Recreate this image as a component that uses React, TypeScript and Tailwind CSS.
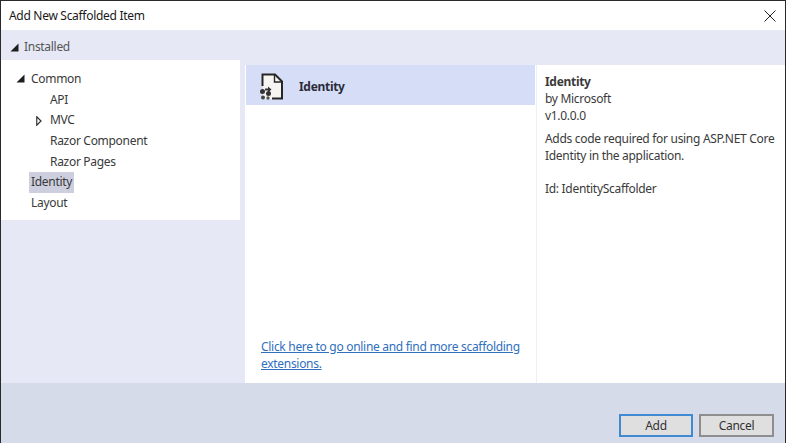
const font = "font-['Noto_Sans','Open_Sans',sans-serif]"

function TriDown({ className }: { className?: string }) {
    return (
        <svg width="9" height="9" viewBox="0 0 9 9" className={className}>
            <path d="M8.5 0.5V8.5H0.5Z" fill="#1e1e1e" />
        </svg>
    )
}

function TriRight() {
    return (
        <svg width="6" height="10" viewBox="0 0 6 10" className="mr-[6px] shrink-0">
            <path d="M0.75 0.75L5 5L0.75 9.25Z" fill="none" stroke="#333" strokeWidth="1.2" />
        </svg>
    )
}

function TreeRow({ label, indent, arrow, selected }: { label: string; indent: string; arrow?: 'open' | 'closed'; selected?: boolean }) {
    return (
        <div className={`flex h-[20.67px] items-center ${indent}`}>
            {arrow === 'open' && <TriDown className="mr-[4px] -mt-[2px] shrink-0" />}
            {arrow === 'closed' && <TriRight />}
            <span className={`px-[2px] h-[20.67px] leading-[20.67px] ${selected ? 'bg-[#cdcfdf]' : ''}`}>{label}</span>
        </div>
    )
}

function IdentityIcon() {
    return (
        <svg width="24" height="28" viewBox="0 0 24 28">
            <path d="M3 2H15L22 9V26H3Z" fill="#f7f5f2" />
            <path d="M2.5 13V1.5H15L22 8.5V25.5H12" fill="none" stroke="#262626" strokeWidth="2" />
            <path d="M14.5 2V9H21.5" fill="none" stroke="#262626" strokeWidth="1.4" />
            <path d="M5 15.5L8 15.5L8 13.5L11.5 16.5L8 19.5L8 17.5L5 17.5Z" fill="#333" />
            <circle cx="2.5" cy="18.5" r="2.5" fill="#333" />
            <circle cx="8.5" cy="20.5" r="2.5" fill="#333" />
            <circle cx="3" cy="24.5" r="2" fill="#444" />
            <circle cx="8" cy="25" r="1.7" fill="#555" />
        </svg>
    )
}

export default function App() {
    return (
        <div className={`w-[786px] h-[443px] flex flex-col overflow-hidden bg-[#e6e9f5] border-t border-[#2a2a2a] border-l border-r text-[12px] tracking-[-0.3px] text-[#3a3a3a] ${font}`}>
            {/* title bar */}
            <div className="h-[29px] shrink-0 bg-white flex items-center justify-between pl-[8px] pr-[9px] text-[#1a1a1a]">
                <span>Add New Scaffolded Item</span>
                <svg width="12" height="12" viewBox="0 0 12 12">
                    <path d="M0.5 0.5L11.5 11.5M11.5 0.5L0.5 11.5" stroke="#222" strokeWidth="1" fill="none" />
                </svg>
            </div>

            {/* installed header */}
            <div className="h-[30px] shrink-0 flex items-center pl-[9px] pt-[4px] gap-[5px] text-[#555]">
                <TriDown />
                <span>Installed</span>
            </div>

            {/* panes */}
            <div className="h-[323px] shrink-0 flex items-start">
                <div className="w-[239px] h-[160px] bg-white pt-[9px] shrink-0">
                    <TreeRow label="Common" indent="pl-[15px]" arrow="open" />
                    <TreeRow label="API" indent="pl-[47px]" />
                    <TreeRow label="MVC" indent="pl-[35px]" arrow="closed" />
                    <TreeRow label="Razor Component" indent="pl-[47px]" />
                    <TreeRow label="Razor Pages" indent="pl-[47px]" />
                    <TreeRow label="Identity" indent="pl-[28px]" selected />
                    <TreeRow label="Layout" indent="pl-[28px]" />
                </div>
                <div className="ml-[5px] mt-[5px] w-[292px] h-[318px] bg-white flex flex-col justify-between shrink-0 border-r border-[#eef0f8]">
                    <div className="h-[40px] mr-px ml-px bg-[#d6def7] flex items-center pl-[14px] pt-[3px] gap-[15px]">
                        <IdentityIcon />
                        <span className="font-bold text-[#2b2b3a]">Identity</span>
                    </div>
                    <a className="pl-[16px] pr-[10px] pb-[11px] leading-[17px] text-[#2f6fbe] underline">
                        Click here to go online and find more scaffolding extensions.
                    </a>
                </div>
                <div className="mt-[5px] flex-1 h-[318px] bg-white pl-[8px] pt-[8px] leading-[17px]">
                    <div className="font-bold">Identity</div>
                    <div>by Microsoft</div>
                    <div>v1.0.0.0</div>
                    <div className="mt-[6px] pr-[4px]">Adds code required for using ASP.NET Core Identity in the application.</div>
                    <div className="mt-[16px]">Id: IdentityScaffolder</div>
                </div>
            </div>

            {/* footer */}
            <div className="flex-1 bg-[#d6dbe9] flex items-end justify-end gap-[6px] pr-[11px] pb-[6px]">
                <button className="w-[74px] h-[23px] bg-[#dfdfdf] border-2 border-[#3f8ad0] text-[#333]">Add</button>
                <button className="w-[75px] h-[23px] bg-[#dfdfdf] border-2 border-[#8e8e8e] text-[#333]">Cancel</button>
            </div>
        </div>
    )
}
